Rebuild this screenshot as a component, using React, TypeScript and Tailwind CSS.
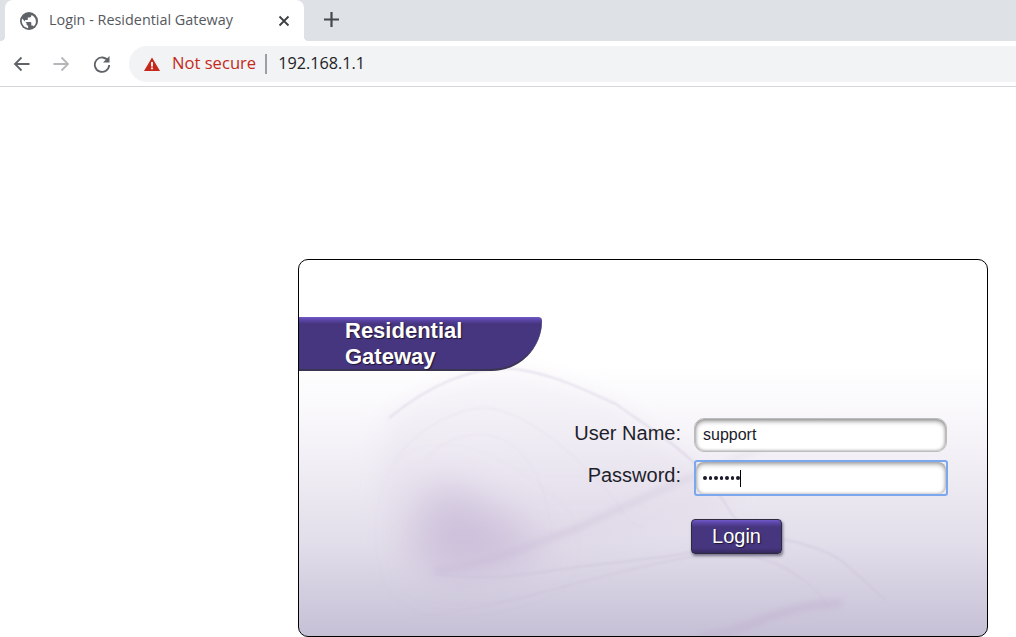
import React from "react";

function Globe() {
  return (
    <svg width="18" height="18" viewBox="0 0 18 18" className="shrink-0">
      <circle cx="9" cy="9" r="9" fill="#5f6368" />
      <path d="M2 6.500l4.500 4.500v1c0 1 .8 1.600 1.600 1.600v2.600C4.600 15.600 1.800 12.700 1.800 9c0-.9.100-1.700.2-2.500z" fill="#fff" />
      <path d="M13.800 14.600c-.2-.7-.9-1.200-1.600-1.200h-.9v-2.700c0-.5-.4-.8-.9-.8H5.100V8.100h1.800c.5 0 .9-.4.900-.9V5.400h1.800c1 0 1.800-.8 1.800-1.800v-.7c2.600 1 4.500 3.500 4.500 6.500 0 1.900-.8 3.600-2.100 4.800z" fill="#fff" />
    </svg>
  );
}

function Smoke() {
  return (
    <svg className="absolute left-0 top-0 pointer-events-none" width="690" height="378" viewBox="0 0 690 378" fill="none">
      <defs>
        <linearGradient id="veil" x1="0" y1="0" x2="0" y2="1">
          <stop offset="0" stopColor="#ece7f1" stopOpacity="0.3" />
          <stop offset="1" stopColor="#d8cfe2" stopOpacity="0.55" />
        </linearGradient>
        <linearGradient id="fade" x1="0" y1="0" x2="1" y2="0">
          <stop offset="0" stopColor="#c4b8d4" stopOpacity="0.55" />
          <stop offset="0.6" stopColor="#c4b8d4" stopOpacity="0.35" />
          <stop offset="1" stopColor="#c4b8d4" stopOpacity="0" />
        </linearGradient>
        <filter id="soft" x="-30%" y="-30%" width="160%" height="160%"><feGaussianBlur stdDeviation="12" /></filter>
        <filter id="mid" x="-60%" y="-60%" width="220%" height="220%"><feGaussianBlur stdDeviation="20" /></filter>
        <filter id="b1" x="-20%" y="-40%" width="140%" height="180%"><feGaussianBlur stdDeviation="3" /></filter>
        <filter id="b2" x="-20%" y="-20%" width="140%" height="140%"><feGaussianBlur stdDeviation="0.800" /></filter>
      </defs>
      <path d="M90 158C130 125 175 105 217 109C260 115 295 135 317 144C350 175 389 191 439 241C400 262 340 275 271 295C210 315 140 330 95 300C80 250 75 200 90 158Z" fill="url(#veil)" filter="url(#soft)" />
      <path d="M135 225C170 230 220 265 245 290C210 308 170 315 130 312C115 285 118 250 135 225Z" fill="#bdaccf" fillOpacity="0.55" filter="url(#mid)" />
      <path d="M90 158C130 125 175 105 217 109C260 115 295 135 317 144C350 168 389 191 410 220C425 240 432 255 439 262" stroke="#cdc2da" strokeOpacity="0.6" strokeWidth="1.500" filter="url(#b2)" />
      <path d="M95 201C120 165 172 140 200 150C250 165 295 215 317 241C325 255 330 264 345 268" stroke="#d2c8de" strokeOpacity="0.3" strokeWidth="1" filter="url(#b2)" />
      <path d="M127 198C150 175 181 170 200 178C235 192 249 234 253 274" stroke="#d2c8de" strokeOpacity="0.25" strokeWidth="1" filter="url(#b2)" />
      <path d="M136 311C190 305 230 285 271 271C320 250 370 225 407 211C460 190 500 170 543 158" stroke="url(#fade)" strokeWidth="5" filter="url(#b1)" />
      <path d="M136 314C190 322 230 314 271 308C320 302 350 299 385 294C420 285 445 278 475 278C505 282 530 292 543 301C565 320 580 335 588 341" stroke="#c9bdd7" strokeOpacity="0.4" strokeWidth="2" filter="url(#b2)" />
      <path d="M113 358C170 350 215 340 249 331C300 318 345 305 385 298C420 290 455 294 480 305C505 318 525 335 530 350" stroke="#cbc0d9" strokeOpacity="0.4" strokeWidth="2" filter="url(#b2)" />
      <path d="M398 378C425 372 440 370 452 364C475 355 500 345 543 343" stroke="#bba9cc" strokeOpacity="0.35" strokeWidth="8" filter="url(#b1)" />
    </svg>
  );
}

export default function App() {
  return (
    <div className="w-[1016px] h-[637px] overflow-hidden bg-white font-['Open_Sans',sans-serif]">
      <div className="h-[41px] bg-[#dee1e6] flex items-end">
        <div className="relative ml-[5px] w-[299px] h-[41px] bg-white rounded-t-lg flex items-center pl-[15px]">
          <span className="absolute left-[-5px] bottom-0 w-[5px] h-[5px] bg-[radial-gradient(circle_at_0_0,#dee1e6_5px,#ffffff_5.500px)]" />
          <span className="absolute right-[-5px] bottom-0 w-[5px] h-[5px] bg-[radial-gradient(circle_at_100%_0,#dee1e6_5px,#ffffff_5.500px)]" />
          <Globe />
          <span className="ml-[11px] text-[14.400px] text-[#55595e] whitespace-nowrap -mt-px">Login - Residential Gateway</span>
          <svg className="ml-auto mr-[14px]" width="12" height="12" viewBox="0 0 12 12">
            <path d="M1.500 1.500l9 9M10.500 1.500l-9 9" stroke="#3c4043" strokeWidth="1.800" />
          </svg>
        </div>
        <svg className="ml-[19px] mb-[13px]" width="17" height="17" viewBox="0 0 17 17">
          <path d="M8.500 1v15M1 8.500h15" stroke="#45494d" strokeWidth="2.200" />
        </svg>
      </div>

      <div className="h-[46px] border-b border-[#d3d5d8] flex items-center bg-white">
        <svg className="ml-[13px]" width="17" height="16" viewBox="0 0 17 16" fill="none">
          <path d="M16.500 8H2M8.500 1.500L2 8l6.500 6.500" stroke="#5f6368" strokeWidth="1.800" />
        </svg>
        <svg className="ml-[23px]" width="17" height="16" viewBox="0 0 17 16" fill="none">
          <path d="M.5 8H15M8.500 1.500L15 8l-6.500 6.500" stroke="#b4b6b9" strokeWidth="1.800" />
        </svg>
        <svg className="ml-[23px]" width="18" height="18" viewBox="0 0 18 18" fill="none">
          <path d="M15.200 6A7.200 7.200 0 1 0 16.200 10" stroke="#5f6368" strokeWidth="1.800" />
          <path d="M16.500 1v6.500H10z" fill="#5f6368" />
        </svg>
        <div className="ml-[18px] flex-1 h-[36px] rounded-l-[18px] bg-[#f1f3f4] flex items-center pl-[15px] mr-[-2px]">
          <svg width="16" height="14" viewBox="0 0 16 14">
            <path d="M8 .5L16 14H0z" fill="#c5291c" />
            <path d="M7.100 5h1.800v4.500H7.100zM7.100 10.500h1.800v1.800H7.100z" fill="#fff" />
          </svg>
          <span className="ml-[12px] text-[16.600px] text-[#c5291c] whitespace-nowrap -mt-px">Not secure</span>
          <span className="ml-[9px] w-[2px] h-[20px] bg-[#9aa0a6]" />
          <span className="ml-[11px] text-[16.200px] text-[#202124] whitespace-nowrap -mt-px">192.168.1.1</span>
        </div>
      </div>

      <div className="relative ml-[298px] mt-[172px] w-[690px] h-[378px] border border-black rounded-[10px] overflow-hidden bg-[linear-gradient(to_bottom,#ffffff_0%,#ffffff_28%,#f5f3f8_48%,#e2deea_75%,#c6c0d6_100%)] font-['Liberation_Sans',sans-serif] pt-[57px]">
        <Smoke />
        <div className="relative w-[243px] h-[54px] pt-px rounded-tr-[4px] rounded-br-[54px] bg-[linear-gradient(to_bottom,#7059c8_0,#5a45a5_3px,#46357f_7px,#46357f_100%)] border-b-2 border-[#3a3550] pl-[46px] text-[22px] leading-[26px] font-bold text-white [text-shadow:1px_1px_1px_#1d1733]">
          Residential<br />Gateway
        </div>

        <div className="relative mt-[47px] ml-[242px] flex flex-col">
          <div className="flex items-center h-[34px]">
            <label className="w-[140px] text-right text-[20px] text-[#1f1f2b] whitespace-nowrap -mt-[5px]">User Name:</label>
            <div className="ml-[13px] w-[253px] h-[34px] rounded-[10px] border border-[#bcbcbc] bg-white shadow-[inset_0_2px_5px_#8f8f8f,inset_0_0_3px_#a8a8a8] pl-[8px] flex items-center text-[16px] text-[#1a1a2a]">
              support
            </div>
          </div>
          <div className="flex items-center h-[36px] mt-[8px]">
            <label className="w-[140px] text-right text-[20px] text-[#1f1f2b] whitespace-nowrap -mt-[7px]">Password:</label>
            <div className="ml-[13px] w-[254px] h-[36px] rounded-[3px] border-2 border-[#7ba7ef]">
              <div className="w-full h-full rounded-[8px] bg-white shadow-[inset_0_2px_5px_#9a9a9a,inset_0_0_3px_#b5b5b5] pl-[7px] flex items-center">
                <span className="flex gap-[2px]">
                  <span className="size-[3.500px] rounded-full bg-[#1a1a2a]" />
                  <span className="size-[3.500px] rounded-full bg-[#1a1a2a]" />
                  <span className="size-[3.500px] rounded-full bg-[#1a1a2a]" />
                  <span className="size-[3.500px] rounded-full bg-[#1a1a2a]" />
                  <span className="size-[3.500px] rounded-full bg-[#1a1a2a]" />
                  <span className="size-[3.500px] rounded-full bg-[#1a1a2a]" />
                  <span className="size-[3.500px] rounded-full bg-[#1a1a2a]" />
                </span>
                <span className="w-px h-[17px] bg-black" />
              </div>
            </div>
          </div>
          <button className="mt-[23px] ml-[150px] w-[91px] h-[35px] rounded-[4px] border border-[#2f2a3d] bg-[linear-gradient(to_bottom,#7059c8_0,#5a45a5_3px,#46357f_7px,#46357f_85%,#352a5e_100%)] text-white text-[20px] leading-none shadow-[1px_2px_3px_#77738a] [text-shadow:1px_1px_1px_#1d1733] pb-[2px]">
            Login
          </button>
        </div>
      </div>
    </div>
  );
}
